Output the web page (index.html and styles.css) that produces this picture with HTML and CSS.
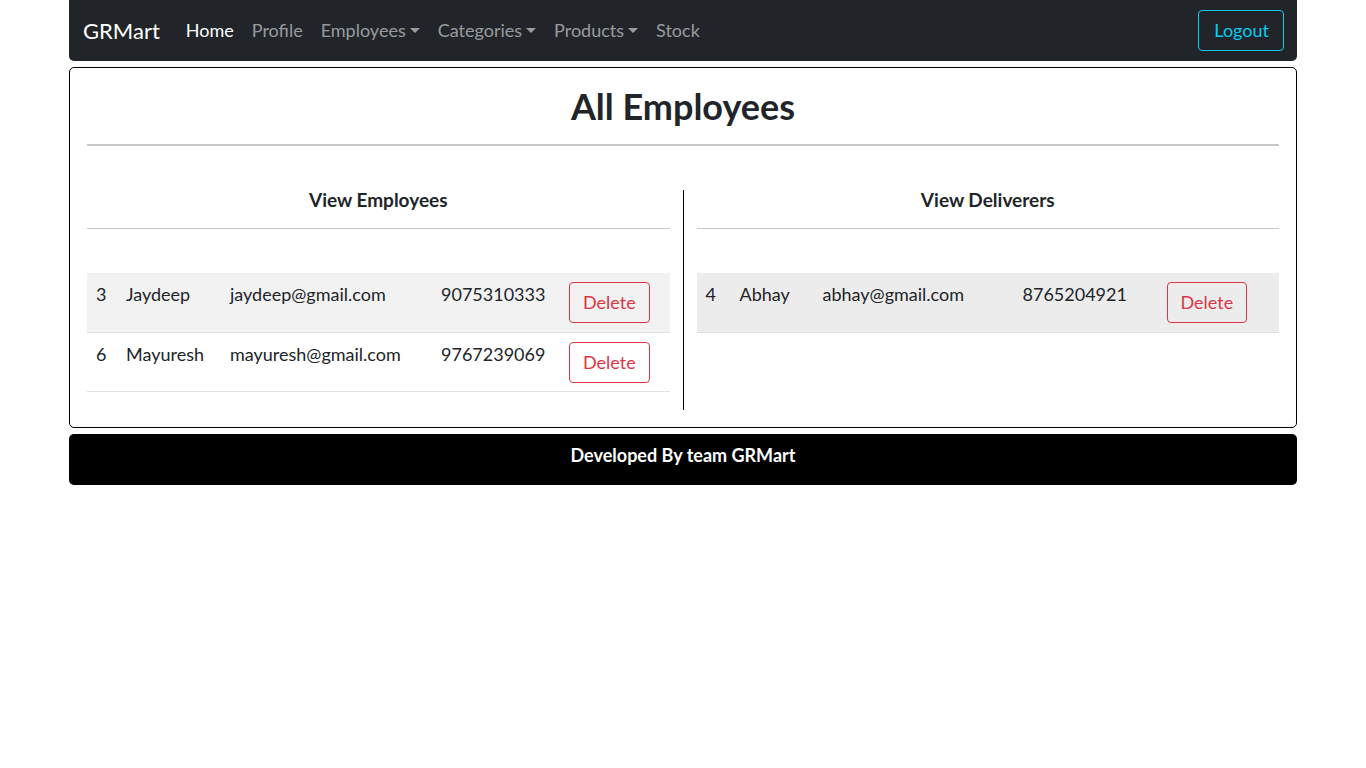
FILE: index.html
```html
<!DOCTYPE html>
<html lang="en">
<head>
<meta charset="utf-8">
<title>GRMart - All Employees</title>
<link rel="stylesheet" href="styles.css">
</head>
<body>
<div class="page">
  <nav class="navbar">
    <a class="brand" href="#">GRMart</a>
    <ul class="nav">
      <li><a class="nav-link active" href="#">Home</a></li>
      <li><a class="nav-link" href="#">Profile</a></li>
      <li><a class="nav-link dropdown" href="#">Employees</a></li>
      <li><a class="nav-link dropdown" href="#">Categories</a></li>
      <li><a class="nav-link dropdown" href="#">Products</a></li>
      <li><a class="nav-link" href="#">Stock</a></li>
    </ul>
    <button class="btn btn-logout">Logout</button>
  </nav>

  <main class="card">
    <h1 class="title">All Employees</h1>
    <hr class="title-rule">
    <div class="columns">
      <section class="col">
        <h5 class="col-title">View Employees</h5>
        <hr class="col-rule">
        <table class="table table-emp">
          <tbody>
            <tr class="striped">
              <td>3</td><td>Jaydeep</td><td>jaydeep@gmail.com</td><td>9075310333</td>
              <td><button class="btn btn-delete">Delete</button></td>
            </tr>
            <tr>
              <td>6</td><td>Mayuresh</td><td>mayuresh@gmail.com</td><td>9767239069</td>
              <td><button class="btn btn-delete">Delete</button></td>
            </tr>
          </tbody>
        </table>
      </section>
      <div class="divider"></div>
      <section class="col">
        <h5 class="col-title">View Deliverers</h5>
        <hr class="col-rule">
        <table class="table table-del">
          <tbody>
            <tr class="hovered">
              <td>4</td><td>Abhay</td><td>abhay@gmail.com</td><td>8765204921</td>
              <td><button class="btn btn-delete">Delete</button></td>
            </tr>
          </tbody>
        </table>
      </section>
    </div>
  </main>

  <footer class="footer">
    <p>Developed By team GRMart</p>
  </footer>
</div>
</body>
</html>
```

FILE: styles.css
```css
* { box-sizing: border-box; }

html, body {
  margin: 0;
  padding: 0;
  background: #fff;
}

body {
  font-family: "Lato", "Noto Sans", "Liberation Sans", sans-serif;
  font-size: 18px;
  line-height: 1.5;
  color: #212529;
}

.page {
  width: 1228px;
  margin: 0 auto;
}

/* Navbar */
.navbar {
  display: flex;
  align-items: center;
  height: 61px;
  background: #212529;
  border-radius: 0 0 5px 5px;
  padding: 0 13px 0 14px;
}

.brand {
  color: #fff;
  text-decoration: none;
  font-size: 22px;
  margin-right: 17px;
}

.nav {
  display: flex;
  list-style: none;
  margin: 0;
  padding: 0;
  flex: 1;
}

.nav-link {
  display: block;
  padding: 8px 9px;
  color: rgba(255, 255, 255, 0.55);
  text-decoration: none;
}

.nav-link.active { color: #fff; }

.nav-link.dropdown::after {
  content: "";
  display: inline-block;
  margin-left: 4px;
  vertical-align: 4px;
  border-top: 5px solid;
  border-left: 5px solid transparent;
  border-right: 5px solid transparent;
}

.btn {
  font-family: inherit;
  font-size: 18px;
  line-height: 27px;
  background: transparent;
  border: 1px solid;
  border-radius: 4px;
  padding: 6px 13px;
  cursor: pointer;
}

.btn-logout {
  color: #0dcaf0;
  border-color: #0dcaf0;
  padding: 6px 14px 6px 15px;
}

/* Card */
.card {
  margin-top: 6px;
  border: 1px solid #000;
  border-radius: 5px;
  padding: 16px 17px 17px;
}

.title {
  margin: 0;
  text-align: center;
  font-size: 36px;
  font-weight: 700;
  line-height: 44px;
}

.title-rule {
  margin: 16px 0 44px;
  border: 0;
  border-top: 2px solid #c8c8c8;
}

.columns {
  display: grid;
  grid-template-columns: 1fr 1px 1fr;
  column-gap: 13px;
}

.divider { background: #000; }

.col-title {
  margin: 0;
  text-align: center;
  font-size: 19px;
  font-weight: 700;
  line-height: 19px;
}

.col-rule {
  margin: 19px 0 44px;
  border: 0;
  border-top: 1px solid #c8c8c8;
}

.table {
  width: 100%;
  border-collapse: collapse;
  margin-bottom: 18px;
  table-layout: fixed;
}

.table td {
  padding: 8px 9px 0;
  height: 59px;
  vertical-align: top;
  border-bottom: 1px solid #dee2e6;
  white-space: nowrap;
}

.table tr.striped td { background: #f2f2f2; }
.table tr.hovered td { background: #ececec; }

.table-emp td:nth-child(1) { width: 30px; }
.table-emp td:nth-child(2) { width: 104px; }
.table-emp td:nth-child(3) { width: 211px; }
.table-emp td:nth-child(4) { width: 128px; }

.table-del td:nth-child(1) { width: 34px; }
.table-del td:nth-child(2) { width: 83px; }
.table-del td:nth-child(3) { width: 200px; }
.table-del td:nth-child(4) { width: 144px; }

.btn-delete {
  margin-top: 1px;
  color: #dc3545;
  border-color: #dc3545;
}

/* Footer */
.footer {
  margin-top: 6px;
  background: #000;
  color: #fff;
  border-radius: 5px;
  text-align: center;
  padding: 8px 0 16px;
}

.footer p {
  margin: 0;
  font-weight: 700;
  line-height: 27px;
}
```
